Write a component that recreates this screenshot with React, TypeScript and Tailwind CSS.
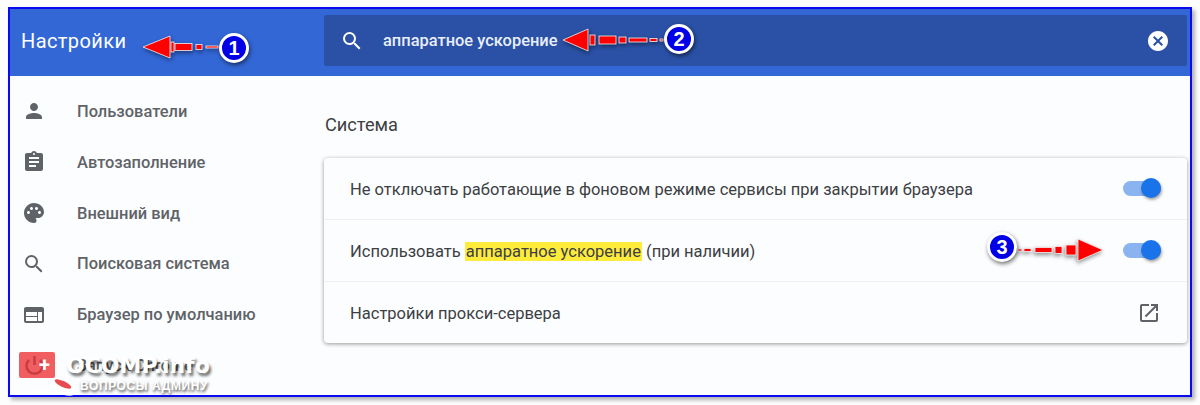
import { MdAssignment, MdCancel, MdOpenInNew, MdPalette, MdPerson, MdSearch, MdWeb } from "react-icons/md"
import type { ElementType } from "react"

const NAV: { label: string; Icon: ElementType | null }[] = [
  { label: "Пользователи", Icon: MdPerson },
  { label: "Автозаполнение", Icon: MdAssignment },
  { label: "Внешний вид", Icon: MdPalette },
  { label: "Поисковая система", Icon: MdSearch },
  { label: "Браузер по умолчанию", Icon: MdWeb },
  { label: "Запуск Chrome", Icon: null },
]

function Toggle() {
  return (
    <div className="relative h-[15px] w-[38px] rounded-full bg-[#8ab4f0]">
      <div className="absolute right-0 top-[-3px] h-[20px] w-[20px] rounded-full bg-[#1a73e8] shadow-[1px_2px_3px_rgba(0,0,0,0.35)]" />
    </div>
  )
}

function Badge({ n, className }: { n: number; className: string }) {
  return (
    <div
      className={`absolute flex h-[30px] w-[30px] items-center justify-center rounded-full border-[3px] border-white bg-[#0000e6] font-['Liberation_Sans',sans-serif] text-[20px] font-bold text-white shadow-[1px_2px_4px_rgba(0,0,0,0.55)] ${className}`}
    >
      {n}
    </div>
  )
}

// dashed red arrow, drawn pointing left; pieces are [distance from tip, length, thickness]
function Arrow({ width, pieces, head = 26, className }: { width: number; pieces: number[][]; head?: number; className: string }) {
  return (
    <svg
      width={width}
      height={26}
      viewBox={`0 0 ${width} 26`}
      className={`absolute drop-shadow-[1px_2px_2px_rgba(0,0,0,0.45)] ${className}`}
    >
      <polygon points={`1,13 ${head},2 ${head},24`} fill="#fe0000" stroke="#f2f2f2" strokeWidth="0.8" />
      {pieces.map(([x, w, h]) => (
        <rect key={x} x={x} y={13 - h / 2} width={w} height={h} fill="#fe0000" stroke="#f2f2f2" strokeWidth="0.8" />
      ))}
    </svg>
  )
}

function Watermark() {
  return (
    <>
      <div className="absolute left-[19px] top-[352px] h-[26px] w-[36px] rounded-[2px] bg-[#ee4d50]/90" />
      <svg width="22" height="22" viewBox="0 0 22 22" className="absolute left-[23px] top-[354px]">
        <path d="M6 6 A8 8 0 1 0 17 6" fill="none" stroke="#c93c40" strokeWidth="2.5" />
        <path d="M11.5 2 V11" stroke="#c93c40" strokeWidth="2.5" />
      </svg>
      <div className="absolute left-[39px] top-[354px] text-[20px] font-bold leading-[22px] text-white">+</div>
      <svg width="56" height="24" viewBox="0 0 56 24" className="absolute left-[26px] top-[376px]">
        <path d="M2 12 C 10 18, 20 18, 28 8" fill="none" stroke="#ffffff" strokeWidth="1.5" />
        <ellipse cx="37" cy="12" rx="13" ry="6" fill="#ffffff" transform="rotate(25 37 12)" />
        <ellipse cx="37" cy="8" rx="9" ry="3" fill="#e84a4f" transform="rotate(25 37 8)" />
      </svg>
      <div className="absolute left-[66px] top-[352px] font-['DejaVu_Sans',sans-serif] text-[22px] font-bold leading-[28px] text-white [text-shadow:2px_3px_3px_rgba(0,0,0,0.6)]">
        OCOMP.info
      </div>
      <div className="absolute left-[80px] top-[378px] font-['Liberation_Sans',sans-serif] text-[12px] font-bold leading-[16px] tracking-[0.6px] text-white [text-shadow:1px_2px_3px_rgba(0,0,0,0.7)]">
        ВОПРОСЫ АДМИНУ
      </div>
    </>
  )
}

export default function App() {
  return (
    <div className="relative h-[405px] w-[1200px] overflow-hidden bg-[#fdfdfd] pl-[8px] pt-[7px] font-['Roboto',sans-serif]">
      <div className="flex h-[390px] w-[1184px] flex-col overflow-hidden border-2 border-[#0a0af0] bg-[#fcfdfe] shadow-[3px_3px_4px_rgba(0,0,0,0.3)]">
        {/* header */}
        <div className="flex h-[67px] shrink-0 bg-[#3367d6]">
          <div className="w-[314px] pl-[11px] pt-[18px] text-[20px] leading-[28px] tracking-[0.4px] text-white">Настройки</div>
          <div className="mb-[10px] mr-[3px] mt-[6px] flex flex-1 items-center rounded-[2px] bg-[#2a51a5] pl-[16px] pr-[17px]">
            <MdSearch className="h-[24px] w-[24px] text-white" />
            <span className="ml-[19px] flex-1 pt-[2px] text-[16.45px] font-medium text-[#e8eefa]">аппаратное ускорение</span>
            <MdCancel className="h-[24px] w-[24px] text-white" />
          </div>
        </div>

        <div className="flex flex-1">
          {/* sidebar */}
          <nav className="w-[314px] shrink-0 pt-[10px]">
            {NAV.map(({ label, Icon }) => (
              <div key={label} className="flex h-[50.8px] items-center pl-[12px] text-[16.45px] font-medium text-[#5f6368]">
                <div className="w-[55px]">{Icon && <Icon className="h-[24px] w-[24px]" />}</div>
                <span className="pt-[2px]">{label}</span>
              </div>
            ))}
          </nav>

          {/* main column */}
          <main className="mr-[3px] flex-1">
            <h2 className="pl-[1px] pt-[38px] text-[18.2px] font-normal leading-[22px] text-[#3c4043]">Система</h2>
            <div className="mt-[22px] rounded-[4px] bg-[#fcfdfe] text-[16.5px] text-[#3c4043] shadow-[0_1px_4px_rgba(0,0,0,0.4)]">
              <div className="flex h-[61px] items-center justify-between pl-[26px] pr-[26px]">
                <span className="pt-[3px]">Не отключать работающие в фоновом режиме сервисы при закрытии браузера</span>
                <Toggle />
              </div>
              <div className="flex h-[62px] items-center justify-between border-t border-[#eff0f1] pl-[26px] pr-[26px]">
                <span className="pt-[3px]">
                  Использовать <span className="bg-[#ffeb3b] px-[1px]">аппаратное ускорение</span> (при наличии)
                </span>
                <Toggle />
              </div>
              <div className="flex h-[62px] items-center justify-between border-t border-[#eff0f1] pl-[26px] pr-[26px]">
                <span className="pt-[3px]">Настройки прокси-сервера</span>
                <MdOpenInNew className="h-[24px] w-[24px] text-[#5f6368]" />
              </div>
            </div>
          </main>
        </div>
      </div>

      {/* annotations on top of the screenshot */}
      <Arrow
        width={78}
        head={28}
        pieces={[[29, 3, 10], [33, 17, 7], [54, 6, 5], [64, 12, 2]]}
        className="left-[142px] top-[34px]"
      />
      <Badge n={1} className="left-[219px] top-[33px]" />
      <Arrow
        width={104}
        pieces={[[28, 5, 10], [37, 17, 8], [57, 7, 6], [67, 18, 4], [88, 7, 3], [98, 3, 2]]}
        className="left-[562px] top-[27px]"
      />
      <Badge n={2} className="left-[664px] top-[24px]" />
      <Arrow
        width={88}
        pieces={[[28, 10, 10], [42, 7, 7], [52, 17, 5], [73, 7, 3], [82, 4, 2]]}
        className="left-[1016px] top-[237px] -scale-x-100"
      />
      <Badge n={3} className="left-[987px] top-[232px]" />
      <Watermark />
    </div>
  )
}
